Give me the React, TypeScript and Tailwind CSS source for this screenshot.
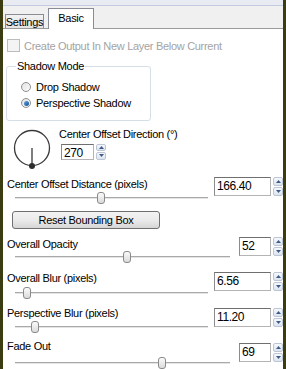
function SpinButtons({ h }: { h: string }) {
  return (
    <div className={`flex w-[10px] flex-col gap-px ${h}`}>
      <div className="flex flex-1 items-center justify-center rounded-[2px] border border-[#bcc6d4] bg-gradient-to-b from-[#f6f9fc] to-[#dbe4ee]">
        <svg width="5" height="3" viewBox="0 0 5 3">
          <path d="M0 3 L2.5 0 L5 3Z" fill="#3d5a8a" />
        </svg>
      </div>
      <div className="flex flex-1 items-center justify-center rounded-[2px] border border-[#bcc6d4] bg-gradient-to-b from-[#f6f9fc] to-[#dbe4ee]">
        <svg width="5" height="3" viewBox="0 0 5 3">
          <path d="M0 0 L2.5 3 L5 0Z" fill="#3d5a8a" />
        </svg>
      </div>
    </div>
  );
}

function SpinBox({ value, w, h }: { value: string; w: string; h: string }) {
  return (
    <div className="flex items-start gap-[2px]">
      <div
        className={`${w} ${h} border border-[#b4b4b4] border-t-[#6f6f6f] border-l-[#8c8c8c] bg-white pl-[2px] text-[12px] leading-[16px] tracking-[-0.4px] text-black`}
      >
        {value}
      </div>
      <SpinButtons h={h} />
    </div>
  );
}

function Slider({ w, pos }: { w: string; pos: number }) {
  return (
    <div className={`relative ml-[12px] h-[12px] ${w}`}>
      <div className="absolute left-0 right-0 top-[5px] h-[2px] border-t border-[#a9a9a9] bg-[#e4e4e4]" />
      <div
        className="absolute top-0 h-[12px] w-[8px] rounded-[3px] border border-[#8a8a8a] bg-gradient-to-b from-[#fbfbfb] to-[#dadada]"
        style={{ left: pos }}
      />
    </div>
  );
}

function Radio({ checked, label }: { checked?: boolean; label: string }) {
  return (
    <div className="flex h-[16px] items-center">
      <div className="ml-[14px] flex h-[10px] w-[10px] items-center justify-center rounded-full border border-[#8e8f8f] bg-gradient-to-br from-[#e2e2e2] to-[#fbfbfb]">
        {checked && <div className="h-[5px] w-[5px] rounded-full bg-gradient-to-br from-[#62a8e8] to-[#134b8a]" />}
      </div>
      <span className="ml-[5px]">{label}</span>
    </div>
  );
}

export default function App() {
  return (
    <div
      className="flex h-[369px] w-[286px] flex-col overflow-hidden border-x-[3px] border-[#3c3c12] bg-white text-[11px] leading-[14px] tracking-[-0.3px] text-black"
      style={{ fontFamily: '"Liberation Sans", Arial, sans-serif' }}
    >
      <div className="h-[6px] border-b border-[#c2cbe0] bg-[#e9ebf3]" />
      <div className="flex h-[24px] items-end border-b border-[#9a9a9a] bg-[#f0f0f0] pl-[2px]">
        <div className="flex h-[14px] w-[39px] items-center justify-center border border-b-0 border-[#898c95] bg-gradient-to-b from-[#f2f2f2] to-[#e3e3e3]">
          Settings
        </div>
        <div className="relative -mb-px ml-[4px] flex h-[21px] w-[46px] items-center justify-center border border-b-0 border-[#898c95] bg-white pb-[2px]">
          Basic
        </div>
      </div>

      <div className="mt-[10px] flex h-[13px] items-center pl-[4px]">
        <div className="h-[13px] w-[13px] border border-[#bcbcbc] bg-[#f4f4f4]" />
        <span className="ml-[4px] text-[#a3a3a3]">Create Output In New Layer Below Current</span>
      </div>

      <div className="relative ml-[3px] mt-[14px] h-[56px] w-[145px] rounded-[3px] border border-[#d5dfe5] pt-[12px]">
        <span className="absolute -top-[8px] left-[9px] bg-white px-px">Shadow Mode</span>
        <Radio label="Drop Shadow" />
        <Radio checked label="Perspective Shadow" />
      </div>

      <div className="mt-[7px] flex items-start">
        <svg className="ml-[9px]" width="40" height="44" viewBox="0 0 40 44">
          <circle cx="20" cy="20" r="17.5" fill="none" stroke="#3a3a3a" strokeWidth="1.3" />
          <line x1="20" y1="20" x2="20" y2="38" stroke="#3a3a3a" strokeWidth="1.3" />
          <circle cx="20" cy="38" r="3" fill="#2e2e2e" />
        </svg>
        <div className="ml-[7px] flex flex-col">
          <span className="-mt-px">Center Offset Direction (°)</span>
          <div className="ml-[2px] mt-[3px]">
            <SpinBox value="270" w="w-[33px]" h="h-[16px]" />
          </div>
        </div>
      </div>

      <div className="mt-[5px] flex items-start justify-between">
        <div className="flex flex-col">
          <span className="pl-[4px]">Center Offset Distance (pixels)</span>
          <div className="mt-px">
            <Slider w="w-[193px]" pos={82} />
          </div>
        </div>
        <SpinBox value="166.40" w="w-[57px]" h="h-[19px]" />
      </div>

      <button className="ml-[9px] mt-[7px] h-[19px] w-[148px] rounded-[3px] border border-[#707070] bg-gradient-to-b from-[#f3f3f3] via-[#ebebeb] to-[#d6d6d6] text-[11px] leading-[14px]">
        Reset Bounding Box
      </button>

      <div className="mt-[8px] flex items-start justify-between">
        <div className="flex flex-col">
          <span className="pl-[4px]">Overall Opacity</span>
          <Slider w="w-[215px]" pos={108} />
        </div>
        <SpinBox value="52" w="w-[32px]" h="h-[19px]" />
      </div>

      <div className="mt-[8px] flex items-start justify-between">
        <div className="flex flex-col">
          <span className="pl-[4px]">Overall Blur (pixels)</span>
          <div className="mt-[2px]">
            <Slider w="w-[193px]" pos={8} />
          </div>
        </div>
        <div className="mt-px">
          <SpinBox value="6.56" w="w-[57px]" h="h-[19px]" />
        </div>
      </div>

      <div className="mt-[7px] flex items-start justify-between">
        <div className="flex flex-col">
          <span className="pl-[4px]">Perspective Blur (pixels)</span>
          <div className="mt-px">
            <Slider w="w-[193px]" pos={16} />
          </div>
        </div>
        <div className="mt-[2px]">
          <SpinBox value="11.20" w="w-[57px]" h="h-[19px]" />
        </div>
      </div>

      <div className="mt-[6px] flex items-start justify-between">
        <div className="flex flex-col">
          <span className="pl-[4px]">Fade Out</span>
          <div className="mt-[4px]">
            <Slider w="w-[215px]" pos={143} />
          </div>
        </div>
        <div className="mt-[4px]">
          <SpinBox value="69" w="w-[32px]" h="h-[19px]" />
        </div>
      </div>
    </div>
  );
}
